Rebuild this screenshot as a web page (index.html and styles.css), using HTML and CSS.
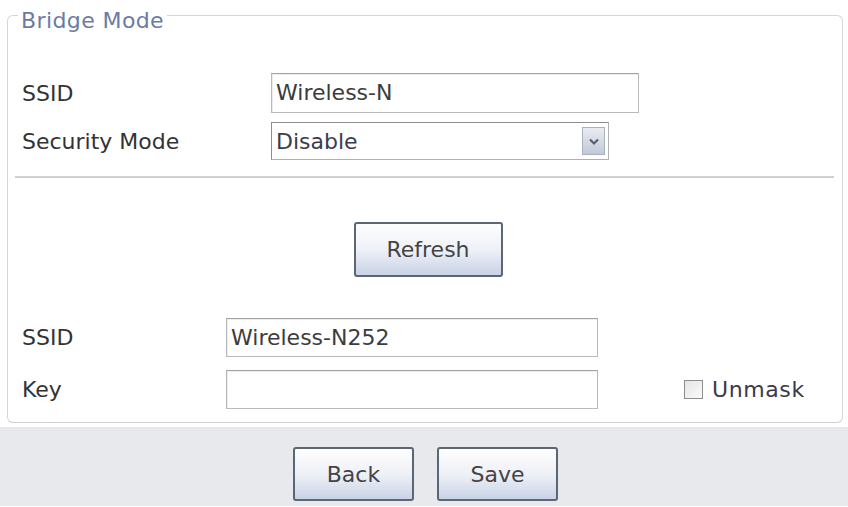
FILE: index.html
```html
<!DOCTYPE html>
<html>
<head>
<meta charset="utf-8">
<link rel="stylesheet" href="styles.css">
</head>
<body>
<fieldset class="panel">
  <legend class="panel-title">Bridge Mode</legend>
  <div class="form-top">
    <label class="lbl">SSID</label>
    <div class="field field-wide">Wireless-N</div>
    <label class="lbl">Security Mode</label>
    <div class="select">
      <span class="select-text">Disable</span>
      <span class="select-arrow">
        <svg width="12" height="9" viewBox="0 0 12 9"><path d="M2 2.5 L6 6.5 L10 2.5" fill="none" stroke="#55607a" stroke-width="2.2"/></svg>
      </span>
    </div>
  </div>
  <div class="sep"></div>
  <div class="center-row"><button class="btn btn-refresh">Refresh</button></div>
  <div class="form-bottom">
    <label class="lbl">SSID</label>
    <div class="field">Wireless-N252</div>
    <span></span>
    <label class="lbl">Key</label>
    <div class="field"></div>
    <label class="check"><span class="box"></span>Unmask</label>
  </div>
</fieldset>
<div class="footer">
  <button class="btn btn-foot">Back</button>
  <button class="btn btn-foot">Save</button>
</div>
</body>
</html>
```

FILE: styles.css
```css
html, body {
  margin: 0;
  padding: 0;
  background: #ffffff;
  font-family: "DejaVu Sans", Verdana, sans-serif;
  color: #3a3a3a;
}
body {
  width: 848px;
  height: 507px;
  overflow: hidden;
}
.panel {
  margin: 0 5px 0 7px;
  padding: 0 8px 13px 10px;
  border: 1px solid #d6d6d6;
  border-bottom-color: #cfcfcf;
  border-radius: 6px;
  min-width: 0;
}
.panel-title {
  padding: 11px 3px 0 3px;
  font-size: 22px;
  line-height: 20px;
  color: #6a7ba6;
  letter-spacing: 0.4px;
}
.form-top {
  display: grid;
  grid-template-columns: 249px auto;
  justify-content: start;
  align-items: center;
  row-gap: 9px;
  margin-top: 42px;
  padding-left: 4px;
}
.lbl {
  font-size: 22px;
  color: #333;
}
.field {
  box-sizing: border-box;
  width: 372px;
  height: 39px;
  border: 1px solid #b9b9b9;
  border-top-color: #a4a4a4;
  box-shadow: inset 1px 1px 0 #ececec;
  background: #fff;
  font-size: 22px;
  line-height: 37px;
  padding-left: 4px;
  color: #3c3c3c;
}
.field-wide {
  width: 368px;
  height: 40px;
  line-height: 38px;
}
.select {
  box-sizing: border-box;
  width: 338px;
  height: 38px;
  border: 1px solid #8e8e8e;
  border-right-color: #b0b0b0;
  border-bottom-color: #b0b0b0;
  display: flex;
  align-items: center;
  justify-content: space-between;
  padding: 0 3px 0 4px;
  font-size: 22px;
  color: #3c3c4c;
}
.select-arrow {
  box-sizing: border-box;
  width: 23px;
  height: 28px;
  border: 1px solid #aab2c2;
  background: linear-gradient(#e9ecf2, #c2c9d6);
  display: flex;
  align-items: center;
  justify-content: center;
}
.sep {
  height: 2px;
  background: #d0d0d0;
  margin: 16px 0 0 -3px;
}
.center-row {
  display: flex;
  justify-content: center;
  margin-top: 44px;
  padding-left: 4px;
}
.btn {
  box-sizing: border-box;
  border: 2px solid #5c6675;
  border-radius: 3px;
  background: linear-gradient(#fdfdfe 0%, #eef1f7 50%, #c9d3e6 100%);
  font-family: "DejaVu Sans", Verdana, sans-serif;
  font-size: 22px;
  color: #444;
  padding: 0;
}
.btn-refresh {
  width: 149px;
  height: 55px;
}
.form-bottom {
  display: grid;
  grid-template-columns: 204px 372px auto;
  justify-content: start;
  align-items: center;
  row-gap: 13px;
  margin-top: 41px;
  padding-left: 4px;
}
.check {
  display: flex;
  align-items: center;
  margin-left: 86px;
  font-size: 22px;
  color: #3a3a4a;
  letter-spacing: 0.6px;
}
.box {
  box-sizing: border-box;
  width: 19px;
  height: 19px;
  border: 1px solid #8c8c8c;
  background: linear-gradient(135deg, #e4e4e4, #fbfbfb);
  margin-right: 9px;
}
.footer {
  margin-top: 4px;
  height: 79px;
  background: #e8e9ec;
  display: flex;
  justify-content: center;
  align-items: flex-start;
  gap: 23px;
  padding-top: 20px;
  box-sizing: border-box;
  padding-left: 3px;
}
.btn-foot {
  width: 121px;
  height: 54px;
}
```
